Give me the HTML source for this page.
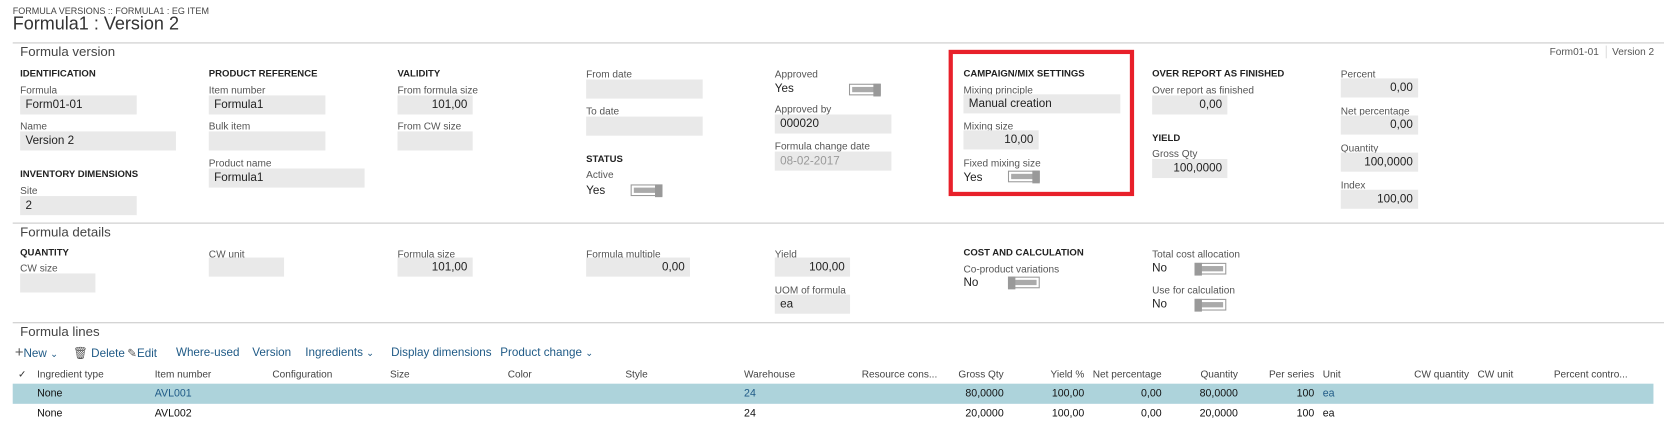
<!DOCTYPE html>
<html><head><meta charset="utf-8"><style>
body{margin:0;background:#fff;width:1664px;height:444px;overflow:hidden;font-family:"Liberation Sans",sans-serif;}
#w{position:absolute;left:0;top:0;width:1570px;height:419px;transform:scale(1.0599);transform-origin:0 0;}
#w div{position:absolute;white-space:nowrap;}
.l{font-size:9.5px;color:#555;}
.h{font-size:9px;font-weight:bold;color:#222;}
.i{background:#e9e9e9;height:18px;font-size:11px;color:#222;line-height:18px;padding:0 5px;box-sizing:border-box;}
.r{text-align:right;}
.v{font-size:11px;color:#222;}
.sec{font-size:12.5px;color:#444;}
.line{height:1px;background:#c8c8c8;left:12px;right:0;}
.tg{width:30px;height:11px;border:1px solid #999;box-sizing:border-box;background:#fff;}
.tg b{position:absolute;top:2px;left:2px;right:2px;height:5px;background:#aaa;}
.tg i{position:absolute;top:-1px;width:7px;height:12px;background:#999;}
.tb{font-size:11px;color:#1f5a86;}
.th{font-size:9.5px;color:#444;}
.td{font-size:10px;color:#111;}
</style></head><body><div id="w">
<div style="left:12px;top:5px;font-size:8.5px;color:#444">FORMULA VERSIONS :: FORMULA1 : EG ITEM</div>
<div style="left:12px;top:13px;font-size:17px;color:#333">Formula1 : Version 2</div>
<div class="line" style="top:40px"></div>
<div class="sec" style="left:19px;top:42px">Formula version</div>
<div style="left:1462px;top:44px;font-size:9.5px;color:#555">Form01-01</div>
<div style="left:1515px;top:43px;width:1px;height:12px;background:#ddd"></div>
<div style="left:1521px;top:44px;font-size:9.5px;color:#555">Version 2</div>

<div class="h" style="left:19px;top:64px">IDENTIFICATION</div>
<div class="l" style="left:19px;top:80px">Formula</div>
<div class="i" style="left:19px;top:90px;width:110px">Form01-01</div>
<div class="l" style="left:19px;top:114px">Name</div>
<div class="i" style="left:19px;top:124px;width:147px">Version 2</div>
<div class="h" style="left:19px;top:159px">INVENTORY DIMENSIONS</div>
<div class="l" style="left:19px;top:175px">Site</div>
<div class="i" style="left:19px;top:185px;width:110px">2</div>

<div class="h" style="left:197px;top:64px">PRODUCT REFERENCE</div>
<div class="l" style="left:197px;top:80px">Item number</div>
<div class="i" style="left:197px;top:90px;width:110px">Formula1</div>
<div class="l" style="left:197px;top:114px">Bulk item</div>
<div class="i" style="left:197px;top:124px;width:110px"></div>
<div class="l" style="left:197px;top:149px">Product name</div>
<div class="i" style="left:197px;top:159px;width:147px">Formula1</div>

<div class="h" style="left:375px;top:64px">VALIDITY</div>
<div class="l" style="left:375px;top:80px">From formula size</div>
<div class="i r" style="left:375px;top:90px;width:71px">101,00</div>
<div class="l" style="left:375px;top:114px">From CW size</div>
<div class="i" style="left:375px;top:124px;width:71px"></div>

<div class="l" style="left:553px;top:65px">From date</div>
<div class="i" style="left:553px;top:75px;width:110px"></div>
<div class="l" style="left:553px;top:100px">To date</div>
<div class="i" style="left:553px;top:110px;width:110px"></div>
<div class="h" style="left:553px;top:145px">STATUS</div>
<div class="l" style="left:553px;top:160px">Active</div>
<div class="v" style="left:553px;top:174px">Yes</div>
<div class="tg" style="left:595px;top:174px"><b></b><i style="right:-1px"></i></div>

<div class="l" style="left:731px;top:65px">Approved</div>
<div class="v" style="left:731px;top:78px">Yes</div>
<div class="tg" style="left:801px;top:79px"><b></b><i style="right:-1px"></i></div>
<div class="l" style="left:731px;top:98px">Approved by</div>
<div class="i" style="left:731px;top:108px;width:110px">000020</div>
<div class="l" style="left:731px;top:133px">Formula change date</div>
<div class="i" style="left:731px;top:143px;width:110px;color:#999">08-02-2017</div>

<div style="left:895px;top:47px;width:167px;height:130px;border:4px solid #e8202a"></div>
<div class="h" style="left:909px;top:64px">CAMPAIGN/MIX SETTINGS</div>
<div class="l" style="left:909px;top:80px">Mixing principle</div>
<div class="i" style="left:909px;top:89px;width:148px">Manual creation</div>
<div class="l" style="left:909px;top:114px">Mixing size</div>
<div class="i r" style="left:909px;top:123px;width:71px">10,00</div>
<div class="l" style="left:909px;top:149px">Fixed mixing size</div>
<div class="v" style="left:909px;top:162px">Yes</div>
<div class="tg" style="left:951px;top:161px"><b></b><i style="right:-1px"></i></div>

<div class="h" style="left:1087px;top:64px">OVER REPORT AS FINISHED</div>
<div class="l" style="left:1087px;top:80px">Over report as finished</div>
<div class="i r" style="left:1087px;top:90px;width:71px">0,00</div>
<div class="h" style="left:1087px;top:125px">YIELD</div>
<div class="l" style="left:1087px;top:140px">Gross Qty</div>
<div class="i r" style="left:1087px;top:150px;width:71px">100,0000</div>

<div class="l" style="left:1265px;top:65px">Percent</div>
<div class="i r" style="left:1265px;top:74px;width:73px">0,00</div>
<div class="l" style="left:1265px;top:100px">Net percentage</div>
<div class="i r" style="left:1265px;top:109px;width:73px">0,00</div>
<div class="l" style="left:1265px;top:135px">Quantity</div>
<div class="i r" style="left:1265px;top:144px;width:73px">100,0000</div>
<div class="l" style="left:1265px;top:170px">Index</div>
<div class="i r" style="left:1265px;top:179px;width:73px">100,00</div>

<div class="line" style="top:210px"></div>
<div class="sec" style="left:19px;top:212px">Formula details</div>
<div class="h" style="left:19px;top:233px">QUANTITY</div>
<div class="l" style="left:19px;top:248px">CW size</div>
<div class="i" style="left:19px;top:258px;width:71px"></div>
<div class="l" style="left:197px;top:235px">CW unit</div>
<div class="i" style="left:197px;top:243px;width:71px"></div>
<div class="l" style="left:375px;top:235px">Formula size</div>
<div class="i r" style="left:375px;top:243px;width:71px">101,00</div>
<div class="l" style="left:553px;top:235px">Formula multiple</div>
<div class="i r" style="left:553px;top:243px;width:98px">0,00</div>
<div class="l" style="left:731px;top:235px">Yield</div>
<div class="i r" style="left:731px;top:243px;width:71px">100,00</div>
<div class="l" style="left:731px;top:269px">UOM of formula</div>
<div class="i" style="left:731px;top:278px;width:71px">ea</div>
<div class="h" style="left:909px;top:233px">COST AND CALCULATION</div>
<div class="l" style="left:909px;top:249px">Co-product variations</div>
<div class="v" style="left:909px;top:261px">No</div>
<div class="tg" style="left:951px;top:261px"><b></b><i style="left:-1px"></i></div>
<div class="l" style="left:1087px;top:235px">Total cost allocation</div>
<div class="v" style="left:1087px;top:247px">No</div>
<div class="tg" style="left:1127px;top:248px"><b></b><i style="left:-1px"></i></div>
<div class="l" style="left:1087px;top:269px">Use for calculation</div>
<div class="v" style="left:1087px;top:281px">No</div>
<div class="tg" style="left:1127px;top:282px"><b></b><i style="left:-1px"></i></div>

<div class="line" style="top:304px"></div>
<div class="sec" style="left:19px;top:306px">Formula lines</div>
<div class="tb" style="left:14px;top:327px"><span style="font-size:14px;line-height:10px;color:#555">+</span>New <span style="font-size:9px">&#8964;</span></div>
<div class="tb" style="left:69px;top:327px"><span style="color:#555">&#128465;</span> Delete</div>
<div class="tb" style="left:120px;top:327px"><span style="color:#555">&#9998;</span>Edit</div>
<div class="tb" style="left:166px;top:327px">Where-used</div>
<div class="tb" style="left:238px;top:327px">Version</div>
<div class="tb" style="left:288px;top:327px">Ingredients <span style="font-size:9px">&#8964;</span></div>
<div class="tb" style="left:369px;top:327px">Display dimensions</div>
<div class="tb" style="left:472px;top:327px">Product change <span style="font-size:9px">&#8964;</span></div>

<div class="th" style="left:17px;top:348px;color:#333">&#10003;</div>
<div class="th" style="left:35px;top:348px">Ingredient type</div>
<div class="th" style="left:146px;top:348px">Item number</div>
<div class="th" style="left:257px;top:348px">Configuration</div>
<div class="th" style="left:368px;top:348px">Size</div>
<div class="th" style="left:479px;top:348px">Color</div>
<div class="th" style="left:590px;top:348px">Style</div>
<div class="th" style="left:702px;top:348px">Warehouse</div>
<div class="th" style="left:813px;top:348px">Resource cons...</div>
<div class="th r" style="left:880px;width:67px;top:348px">Gross Qty</div>
<div class="th r" style="left:960px;width:63px;top:348px">Yield %</div>
<div class="th r" style="left:1020px;width:76px;top:348px">Net percentage</div>
<div class="th r" style="left:1100px;width:68px;top:348px">Quantity</div>
<div class="th r" style="left:1180px;width:60px;top:348px">Per series</div>
<div class="th" style="left:1248px;top:348px">Unit</div>
<div class="th r" style="left:1310px;width:76px;top:348px">CW quantity</div>
<div class="th" style="left:1394px;top:348px">CW unit</div>
<div class="th" style="left:1466px;top:348px">Percent contro...</div>

<div style="left:12px;top:362px;width:1548px;height:19px;background:#add3db"></div>
<div class="td" style="left:35px;top:366px">None</div>
<div class="td" style="left:146px;top:366px;color:#1f5a86">AVL001</div>
<div class="td" style="left:702px;top:366px;color:#1f5a86">24</div>
<div class="td r" style="left:880px;width:67px;top:366px">80,0000</div>
<div class="td r" style="left:960px;width:63px;top:366px">100,00</div>
<div class="td r" style="left:1020px;width:76px;top:366px">0,00</div>
<div class="td r" style="left:1100px;width:68px;top:366px">80,0000</div>
<div class="td r" style="left:1180px;width:60px;top:366px">100</div>
<div class="td" style="left:1248px;top:366px;color:#1f5a86">ea</div>

<div class="td" style="left:35px;top:385px">None</div>
<div class="td" style="left:146px;top:385px">AVL002</div>
<div class="td" style="left:702px;top:385px">24</div>
<div class="td r" style="left:880px;width:67px;top:385px">20,0000</div>
<div class="td r" style="left:960px;width:63px;top:385px">100,00</div>
<div class="td r" style="left:1020px;width:76px;top:385px">0,00</div>
<div class="td r" style="left:1100px;width:68px;top:385px">20,0000</div>
<div class="td r" style="left:1180px;width:60px;top:385px">100</div>
<div class="td" style="left:1248px;top:385px">ea</div>
</div></body></html>
